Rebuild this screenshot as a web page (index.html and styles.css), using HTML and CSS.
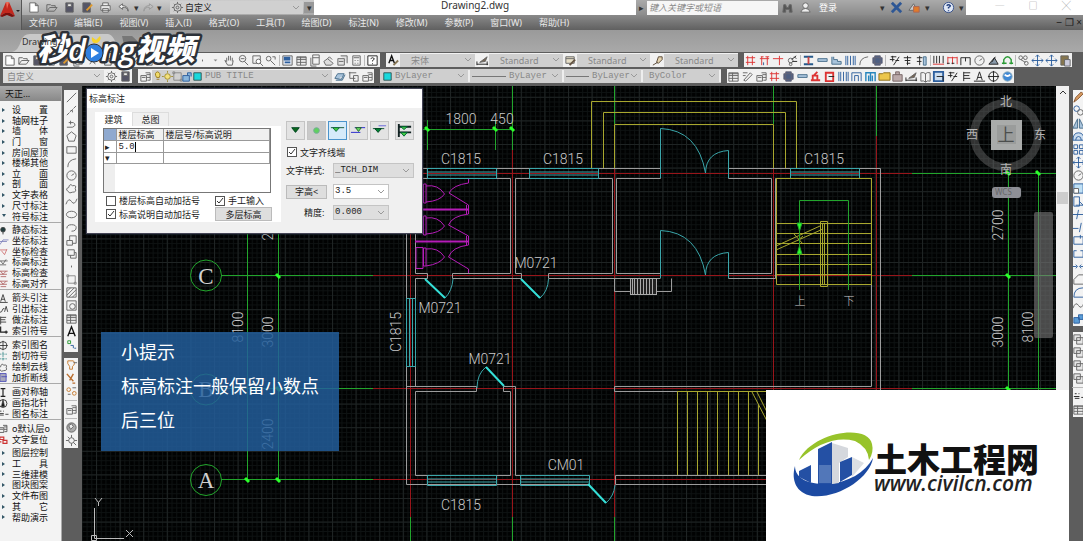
FILE: index.html
```
<!DOCTYPE html>
<html lang="zh-CN">
<head>
<meta charset="utf-8">
<title>Drawing2.dwg</title>
<link rel="stylesheet" href="styles.css">
</head>
<body>
<header class="head">
  <button class="app" aria-label="应用程序菜单"><svg viewBox="0 0 22 21"><path d="M0 14L6 0h3l6 14-5-3-5 0z" fill="#c3271d"/><path d="M6 0h3l-2 7z" fill="#ee6a57"/><path d="M0 14l5-3 5 0 5 3-3 1-5-2-5 2z" fill="#7c0f0c"/><path d="M16 8h4l-2 2z" fill="#222"/></svg></button>
  <div class="titlebar">
    <div class="quick">
      <div class="icons quick-icons" data-icons="new open save saveas print undo"></div><span class="tri">▾</span>
      <div class="icons one" data-icons="redo"></div><span class="tri">▾</span>
      <div class="space"><span class="icons one" data-icons="gear"></span><select aria-label="工作空间"><option>自定义</option></select></div>
      <span class="tri more">▾</span>
    </div>
    <div class="doc">Drawing2.dwg</div>
    <div class="info">
      <span class="tri go">▸</span><input placeholder="键入关键字或短语" aria-label="搜索">
      <div class="icons two" data-icons="binoc person"></div><a class="login" href="#">登录</a>
      <span class="tri push">▾</span><div class="icons two" data-icons="xchg lock"></div><span class="tri">▾</span>
      <div class="icons one help" data-icons="help"></div><span class="tri">▾</span>
    </div>
    <div class="win"><button aria-label="最小化">─</button><button aria-label="最大化">□</button><button aria-label="关闭">╳</button></div>
  </div>
  <nav class="menu"><a href="#">文件(F)</a><a href="#">编辑(E)</a><a href="#">视图(V)</a><a href="#">插入(I)</a><a href="#">格式(O)</a><a href="#">工具(T)</a><a href="#">绘图(D)</a><a href="#">标注(N)</a><a href="#">修改(M)</a><a href="#">参数(P)</a><a href="#">窗口(W)</a><a href="#">帮助(H)</a><span class="mdi">‒ ❐ ×</span></nav>
</header>
<div class="tabs"><svg class="tabshape" viewBox="0 0 118 20" aria-hidden="true"><path d="M0 20Q6 19 9 9Q11 2 18 2H96Q103 3 106 20z" fill="#c9c9c9"/><path d="M110 4h10q6 5 8 9h-16z" fill="#777"/></svg><a class="tab" href="#">Drawing2</a></div>
<div class="bars">
  <div class="bar std icons" data-icons="new open save print saveas sheet cut copy paste match block undo tri redo dot tri hand zoom zoomw zoomp | props table sheet tool box calc | q"></div>
  <div class="bar styles">
    <span class="icons one" data-icons="astyle"></span><select class="c1" aria-label="文字样式"><option>宋体</option></select>
    <span class="icons one" data-icons="dimstyle"></span><select class="c2" aria-label="标注样式"><option>Standard</option></select>
    <span class="icons one" data-icons="tabstyle"></span><select class="c3" aria-label="表格样式"><option>Standard</option></select>
    <span class="icons one" data-icons="leader"></span><select class="c2" aria-label="引线样式"><option>Standard</option></select>
  </div>
  <div class="bar arch icons" data-icons="rhash rcols rbeam knot | ibeam slab stair wallp arc column | fx1 fx2 fx3 | dims dimh dimv circle tri2 gloop | link move move paste"></div>
</div>
<div class="bars second">
  <div class="bar ws"><select aria-label="工作空间"><option>自定义</option></select><span class="icons two" data-icons="gear save"></span></div>
  <div class="bar layer"><span class="icons one" data-icons="layers"></span><span class="icons states" data-icons="bulb sun box0 lockb cyan"></span><select class="mono" aria-label="图层"><option>PUB TITLE</option></select><span class="icons three" data-icons="lay1 lay2 layers"></span></div>
  <div class="bar bylayer"><span class="icons one" data-icons="cyan"></span><select class="mono l1" aria-label="颜色"><option>ByLayer</option></select><i class="ln long"></i><select class="mono l2" aria-label="线型"><option>ByLayer</option></select><i class="ln"></i><select class="mono l3" aria-label="线宽"><option>ByLayer</option></select><select class="mono l4" aria-label="打印样式"><option>ByColor</option></select></div>
  <div class="bar arch2 icons" data-icons="table match layers rhash column slab redst redbox wallp gate gate2 folder case dimstyle book winp fx1 fence aaxis target ball"></div>
</div>
<main>
  <aside class="palette">
    <h2>天正...</h2>
    <ul class="g11 arrows"><li class="j">设 置</li><li>轴网柱子</li><li class="j">墙 体</li><li class="j">门 窗</li><li>房间屋顶</li><li>楼梯其他</li><li class="j">立 面</li><li class="j">剖 面</li><li>文字表格</li><li>尺寸标注</li><li class="down">符号标注</li></ul>
    <ul class="g6"><li data-i="pin">静态标注</li><li data-i="coord">坐标标注</li><li data-i="coordr">坐标检查</li><li data-i="elev">标高标注</li><li data-i="elevr">标高检查</li><li data-i="elevr">标高对齐</li></ul>
    <ul class="g4"><li data-i="aaxis">箭头引注</li><li data-i="leadA">引出标注</li><li data-i="fence">做法标注</li><li data-i="idx">索引符号</li></ul>
    <ul class="g4"><li data-i="target">索引图名</li><li data-i="sect">剖切符号</li><li data-i="cloudb">绘制云线</li><li data-i="brk">加折断线</li></ul>
    <ul class="g3"><li data-i="sym">画对称轴</li><li data-i="north">画指北针</li><li data-i="nm">图名标注</li></ul>
    <ul class="g2"><li data-i="layers">o默认层o</li><li data-i="reset">文字复位</li></ul>
    <ul class="g7 arrows"><li>图层控制</li><li class="j">工 具</li><li>三维建模</li><li>图块图案</li><li>文件布图</li><li class="j">其 它</li><li>帮助演示</li></ul>
  </aside>
  <div class="strip left">
    <div class="icons col" data-icons="line xline pline poly rect arc circle cloudb spline ellipse earc insert block dot box0 hatch region table bigA pts"></div>
    <div class="icons col" data-icons="bulbo bulbx sunx | layers | globe gearx"></div>
  </div>
  <section class="canvas">
    <svg class="drawing" viewBox="82 86 974 455" preserveAspectRatio="xMinYMin slice" role="img" aria-label="建筑平面图">
      <defs>
        <pattern id="minor" x="96" y="262" width="4.72" height="4.72" patternUnits="userSpaceOnUse"><path d="M.5 0V4.72M0 .5H4.72" stroke="#0e1212" fill="none"/></pattern>
        <pattern id="major" x="96" y="262" width="23.6" height="23.6" patternUnits="userSpaceOnUse"><path d="M.5 0V23.6M0 .5H23.6" stroke="#1f2424" fill="none"/></pattern>
        <g id="win"><path d="M0 0H69M0 3.5H69M0 6.5H69M0 10H69M0 0V10M69 0V10"/></g>
        <path id="tick" d="M-2 -2L2 2" stroke="#2bff2b" stroke-width="3"/>
      </defs>
      <rect x="82" y="86" width="2000" height="1000" fill="#010202"/>
      <rect x="82" y="86" width="2000" height="1000" fill="url(#minor)"/>
      <rect x="82" y="86" width="2000" height="1000" fill="url(#major)"/>
      <g class="red"><path d="M373 173.500H912M373 275.500H912M373 388.500H912M373 479.500H912M410.500 150V517M512.500 150V517M614.500 168V517M773.500 168V517M876.500 136V517"/></g>
      <g class="green"><path d="M221 275.500H373M221 388.500H373M221 479.500H373M912 173.500H1056M912 275.500H1056M912 388.500H1056M512.500 86V150M614.500 86V124M773.500 86V124M876.500 86V136M410.500 517V541M512.500 517V541M614.500 517V541M247.500 200V480M278.500 173V480M1008.500 173V480M1038.500 173V480M422 129.500H513M427.500 120V150M495.500 120V150"/>
        <circle cx="206" cy="275.500" r="15.500"/><circle cx="206" cy="389.500" r="15.500"/><circle cx="206" cy="480" r="15.500"/></g>
      <g><use href="#tick" x="278" y="276"/><use href="#tick" x="278" y="389"/><use href="#tick" x="278" y="480"/><use href="#tick" x="247" y="480"/><use href="#tick" x="1008" y="173"/><use href="#tick" x="1008" y="276"/><use href="#tick" x="1008" y="389"/><use href="#tick" x="1038" y="173"/><use href="#tick" x="427" y="129"/><use href="#tick" x="495" y="129"/><use href="#tick" x="512" y="129"/></g>
      <g class="wall"><path d="M406.500 168.500H660.500V178.500H616.500V273.500H660.500M406.500 168.500V484.500H588M415.500 178.500H510.500V273.500H452.500V278.500H521.500V273.500H515.500V178.500H612.500V273.500H548.500V278.500H660.500M415.500 178.500V273.500H427.500V278.500H415.500V386.500M728.500 178.500V168.500H880.500V390M728.500 178.500H771.500V273.500H728.500V278.500H775.500V178.500H871.500V386.500H614.500V391.500H880M406.500 386.500H476.500V391.500H415.500V475.500H510.500V391.500H503.500V386.500H515.500V475.500H588M766 475.500H615.500V484.500H766M614.500 279V291.500H630M656 291.500H671.500V278.500"/></g>
      <g fill="#222" stroke="#aaa"><rect x="630.500" y="278.500" width="26" height="16"/><path d="M632.500 279v15M634.500 279v15M637.500 279v15M640.500 279v15M643.500 279v15M646.500 279v15M649.500 279v15M652.500 279v15"/></g>
      <g class="cyan"><use href="#win" x="427.500" y="168.500"/><use href="#win" x="529.500" y="168.500"/><use href="#win" x="790.500" y="168.500"/><use href="#win" x="427.500" y="475.500"/><use href="#win" x="520.500" y="475.500"/><path d="M406.500 298.500H415.500V366.500H406.500zM409.500 298V366M412.500 298V366"/>
        <path d="M453 279Q452 291 445 298M548.500 279Q548 291 540 298M477 388Q477 374 486 367M615 485Q614 496 606 503M660.500 178V128.500Q698 130 705.500 173Q706 152 728.500 150.500V178M660.500 278V230.500Q698 232 705.500 275Q706 254 728.500 252.500V278"/>
        <path class="leaf" d="M425 279L445 298M521 279L540 298M486 367L504 386M588 484L606 503"/></g>
      <g class="yellow"><path d="M591.500 168V101.500H796.500V168M603.500 168V112.500H785.500V168M614.500 168V124.500H773.500V168M776.500 178.500H871.500V284.500H776.500zM776 223.500H871M776 233.500H871M776 243.500H871M776 254.500H871M776 264.500H871M776 274.500H871"/><path d="M820.500 221.500h7v65h-7zM822.500 223.500h2v61h-2zM776 246L820 226M776 250L823 229M794 234l9 10M803 236l-6 5"/><path d="M677 391.500H766M677.500 392V475M687.500 392V475M697.500 392V475M707.500 392V475M717.500 392V475M728.500 392V475M738.500 392V475M748.500 392V475M758.500 405V475M752 392L767 421M757 392L768 414"/></g>
      <g class="green"><path d="M799.500 290V200.500H848.500V290"/><path d="M797 223h5l-2.500 8zM797 254h5l-2.500-8z" fill="#2bff2b"/></g>
      <g class="magenta"><path d="M415 209.500H469M415 241.500H469" stroke-width="2"/><path d="M468.500 179v4Q453 185 449 193L468.500 205V214Q452 216 448.500 225L468.500 236V245Q452 247 448.500 257L468.500 269V273M466.500 205v9M466.500 236v9M423.500 184h2.500v19h-2.500zM426 186Q438 184 444.500 194Q440 201 426 202M423.500 216h2.500v19h-2.500zM426 218Q438 216 444.500 226Q440 233 426 234M423.500 248h2.500v18h-2.500zM426 249Q438 247 444.500 257Q440 264 426 266M416 247.500H423V268.500H416z"/></g>
      <g class="cad"><text x="461" y="124">1800</text><text x="502" y="124">450</text><text x="461" y="164">C1815</text><text x="563" y="164">C1815</text><text x="824" y="164">C1815</text><text x="536" y="268">M0721</text><text x="440" y="313">M0721</text><text x="490" y="364">M0721</text><text x="566" y="470">CM01</text><text x="461" y="510">C1815</text>
        <text transform="translate(401 332) rotate(-90)">C1815</text><text transform="translate(243 327) rotate(-90)">8100</text><text transform="translate(273 332) rotate(-90)">3000</text><text transform="translate(273 434) rotate(-90)">2400</text><text transform="translate(273 225) rotate(-90)">2700</text><text transform="translate(1003 225) rotate(-90)">2700</text><text transform="translate(1003 332) rotate(-90)">3000</text><text transform="translate(1033 327) rotate(-90)">8100</text></g>
      <g class="hz"><text x="800" y="305">上</text><text x="849" y="305">下</text></g>
      <g class="axis"><text x="206" y="284">C</text><text x="206" y="397">B</text><text x="206" y="488">A</text></g>
      <g stroke="#bbb" fill="none"><path d="M94.500 508V538.500H124M91.500 535.500h5v5h-5zM95 498l3.500 4.500L102 498M98.500 502v4M126 530l7 7M133 530l-7 7"/></g>
      <circle cx="1006" cy="135" r="32" fill="none" stroke="#8b8b8b" stroke-opacity=".36" stroke-width="8"/>
      <rect x="991" y="120" width="31" height="30" fill="#a9abaa"/><rect x="997" y="125" width="19" height="19" fill="#9a9c9b"/>
      <g class="compass"><text x="1006" y="141" class="up">上</text><text x="1006" y="106">北</text><text x="972" y="139">西</text><text x="1040" y="139">东</text><text x="1006" y="174">南</text></g>
      <rect x="992" y="187" width="29" height="11" rx="3" fill="#8e8f96"/><text x="995" y="195" class="wcs">WCS</text>
      <rect x="1034" y="212" width="19" height="126" rx="2" fill="#777" fill-opacity=".62"/>
    </svg>
    <aside class="hint"><p>小提示</p><p>标高标注一般保留小数点</p><p>后三位</p></aside>
    <form class="dialog">
      <h3>标高标注</h3>
      <div class="dbody">
        <div class="dleft">
          <div class="dtabs"><button type="button" class="on">建筑</button><button type="button">总图</button></div>
          <div class="pane">
            <div class="gridbox"><table><thead><tr><th class="k"></th><th class="a">楼层标高</th><th>楼层号/标高说明</th></tr></thead><tbody><tr><td class="k">▸</td><td class="caret"><span>5.0</span></td><td></td></tr><tr><td class="k">▾</td><td></td><td></td></tr></tbody></table></div>
            <div class="checks"><label><input type="checkbox">楼层标高自动加括号</label><label><input type="checkbox" checked>手工输入</label><label><input type="checkbox" checked>标高说明自动加括号</label><button type="button">多层标高</button></div>
          </div>
        </div>
        <div class="dright">
          <div class="modes">
            <button type="button" aria-label="实心"><svg viewBox="0 0 18 18"><path d="M5 6h8l-4 5z" fill="#0a6a1c" stroke="#042"/></svg></button>
            <button type="button" class="dim" aria-label="圆点"><svg viewBox="0 0 18 18"><circle cx="9" cy="9" r="3" fill="#5fd05f" stroke="#7a9"/></svg></button>
            <button type="button" class="on" aria-label="普通"><svg viewBox="0 0 18 18"><path d="M2 6h14" stroke="#153"/><path d="M4 6h7L7.500 10z" fill="#3fd03f" stroke="#164"/></svg></button>
            <button type="button" aria-label="带基线"><svg viewBox="0 0 18 18"><path d="M5 6h11M1 11h10" stroke="#22c"/><path d="M6 6h6l-3 4z" fill="#6d6" stroke="#262"/></svg></button>
            <button type="button" aria-label="引线"><svg viewBox="0 0 18 18"><path d="M8 4h8" stroke="#66d"/><path d="M2 7h12" stroke="#153"/><path d="M4 7h7l-3.500 4z" fill="#083" stroke="#042"/></svg></button>
            <button type="button" class="last" aria-label="多层"><svg viewBox="0 0 18 18"><path d="M3 2v14M3 5h13M3 11h13" stroke="#122" stroke-width="2"/><path d="M5 5h7L8.500 8zM5 11h7l-3.500 4z" fill="#4c4" stroke="#063"/></svg></button>
          </div>
          <label class="ck"><input type="checkbox" checked>文字齐线端</label>
          <div class="frow"><label for="ts">文字样式:</label><select id="ts" class="mono wide"><option>_TCH_DIM</option></select></div>
          <div class="frow"><button type="button">字高&lt;</button><select class="mono white" aria-label="字高"><option>3.5</option></select></div>
          <div class="frow"><label for="pr" class="rt">精度:</label><select id="pr" class="mono"><option>0.000</option></select></div>
        </div>
      </div>
    </form>
  </section>
  <div class="scroll"><svg viewBox="0 0 11 14" aria-hidden="true"><path d="M3 8l3-3 3 3" fill="none" stroke="#333"/></svg><i></i></div>
  <div class="strip right">
    <div class="icons col" data-icons="pencil copyo mirror offset array move circle scaleb stretch trim extend breakr breakp join chamfer fillet spline boom"></div>
    <div class="icons col" data-icons="copy copy copy copy | nm table"></div>
  </div>
  <div class="brand"><svg viewBox="766 390 303 151" role="img" aria-label="土木工程网">
    <path d="M799 460C812 432 868 423 872 444Q874 452 869 460Q868 447 855 441Q828 434 799 460z" fill="#97c32a"/>
    <path d="M795 466C795 480 812 485 829 484C848 482 865 473 873 458C870 478 838 499 812 496C796 493 791 480 795 466z" fill="#1c4aa2"/>
    <path d="M832 443l16 5v9l-9 6v20l-7 1z" fill="#d5d8dd"/><path d="M852 457l12 6-12 14z" fill="#dcdfe3"/>
    <path d="M799 471l12-6v18l-12-6zM818 449l14-7v42h-14zM840 462l12-5v18l-12 7z" fill="#2450a4"/><path d="M819 465h12v18h-12z" fill="#8ba7d2" opacity=".45"/>
    <text x="874" y="472" class="bz">土木工程网</text><text x="874" y="491" class="url">www.civilcn.com</text></svg></div>
</main>
<svg class="mark" viewBox="0 0 170 44" role="img" aria-label="秒懂视频"><g class="mk"><text x="5" y="30" font-size="31">秒</text><text x="36" y="31" font-size="31" class="la">d</text><text x="69" y="31" font-size="31" class="la">ng</text><text x="103" y="30" font-size="30">视频</text></g><circle cx="62" cy="23" r="9" fill="#2e7fe0" stroke="#2c3138"/><path d="M59 18l8 5-8 5z" fill="#fff"/><path d="M60 7l4 3 4-4q2 4-3 7h-3q-3-2-2-6z" fill="#f5d22c"/></svg>
<script src="icons.js"></script>
</body>
</html>
```

FILE: styles.css
```
*{box-sizing:border-box}
body{margin:0;height:100vh;display:flex;flex-direction:column;overflow:hidden;background:#5d5d5d;font:9px/11px "Noto Sans","Noto Sans CJK SC",sans-serif;color:#222;position:relative}
button,input,select{font:inherit;color:inherit;border:0;padding:0;margin:0;background:none;min-width:0;border-radius:0}
a{color:inherit;text-decoration:none}
p,h2,h3,ul{margin:0;padding:0;font-weight:normal;list-style:none}
h2,h3{font-size:9px}
select{appearance:none;height:13px;padding:0 12px 0 4px;background:url("data:image/svg+xml,%3Csvg xmlns='http://www.w3.org/2000/svg' width='8' height='6'%3E%3Cpath d='M1 1l3 3 3-3' fill='none' stroke='%23999'/%3E%3C/svg%3E") no-repeat right 3px center}
.mono{font-family:"Liberation Mono","Noto Sans CJK SC",monospace}
.head{display:grid;grid-template-columns:22px 1fr;grid-template-rows:15px 15px;flex:none}
.app{grid-row:1/3;background:linear-gradient(#aaa,#777);border-right:1px solid #555}
.app svg{display:block;width:22px;height:21px;margin-top:-6px}
.titlebar{display:flex;align-items:stretch;background:#fff;min-width:0}
.quick{width:292px;display:flex;align-items:center;background:linear-gradient(#ccc,#aaa);padding-left:2px}
.quick-icons{width:108px}
.tri{width:9px;font-size:9px;color:#333;text-align:center}
.space{display:flex;align-items:center;width:133px;margin-left:6px;background:#d0d0d0;height:13px}
.space select{flex:1;padding-left:1px;font-size:9px}
.more{margin-left:auto;width:10px;background:#999}
.doc{flex:1;text-align:center;font-size:10px;line-height:11px;color:#333}
.info{width:330px;display:flex;align-items:center;background:linear-gradient(#aaa,#8c8c8c);color:#fff}
.go{width:11px}
.info input{width:131px;height:14px;background:#f6f6f6;color:#555;padding-left:2px;font-style:italic}
.info input::placeholder{color:#888}
.info .two{width:36px}
.login{margin-left:5px}
.push{margin-left:auto}
.help{margin:0 2px 0 9px}
.win{width:117px;display:flex;justify-content:space-around;color:#999;line-height:10px;padding-left:17px}
.win button{height:12px}
.menu{display:flex;align-items:center;gap:17px;padding-left:7px;background:linear-gradient(#8a8a8a,#606060);color:#e9e9e9;white-space:nowrap}
.mdi{margin-left:auto;color:#222;font-size:10px;padding-right:1px}
.tabs{height:22px;flex:none;background:linear-gradient(#9a9a9a,#a9a9a9);padding-left:12px;display:flex;align-items:end;position:relative}
.tabshape{width:118px;height:20px;flex:none;overflow:visible}
.tab{margin-left:-108px;line-height:20px;color:#333;z-index:1}
.bars{display:flex;height:16px;flex:none;gap:6px;padding:1px 0 0 3px;background:#5d5d5d}
.second{height:18px}
.bar{display:flex;align-items:center;height:14px;background:#f1f1f1;flex:none}
.bars select{background-color:#cfcfcf;color:#888}
.std{width:377px}.styles{width:352px}
.arch{width:328px}
.c1{width:75px}.c2{width:74px}.c3{width:73px}
.styles select{text-indent:7px}
.ws{width:129px}.ws select{width:101px;background-color:#dcdcdc}
.layer{width:236px}.states{width:50px;background:#cfcfcf}
.layer select{flex:1;padding:0 0 0 3px}
.three{width:42px}
.bylayer{width:341px;background:#cfcfcf}
.bylayer select{padding-left:1px;height:12px;border-right:2px solid #eee;padding-right:0}
.l1{width:76px}.l2{width:56px}.l3{width:52px}.bylayer .l4{flex:1;padding-left:6px}
.ln{height:1px;width:23px;margin:0 2px;background:#777}.long{width:34px}
.arch2{width:287px}
.icons{display:flex;align-items:center}
.icons button{flex:1 1 0;height:13px;display:flex;justify-content:center;align-items:center}
.icons svg{width:13px;height:13px;flex:none;fill:none;stroke:#666}
.icons>i{width:1px;height:11px;background:#bbb;margin:0 1px}
.one{width:14px;flex:none}.two{width:28px;flex:none}
main{flex:1;display:flex;min-height:0;position:relative}
.palette{width:62px;background:#f3f3f3;border-right:1px solid #aaa;overflow:hidden;flex:none;color:#111}
.palette h2{height:15px;padding:2px 0 0 5px;background:linear-gradient(#aaa,#888);margin-bottom:4px}
.palette ul{display:grid;grid-auto-rows:minmax(0,1fr);border-bottom:1px solid #aaa;margin-bottom:3px}
.palette .g11{height:118px;margin-bottom:2px}.g6{height:65px}.g4{height:44px}.g3{height:33px}.palette .g2{height:22px;border:0}.palette .g7{height:75px;border:0}
.palette li{display:flex;align-items:center;padding-left:12px;white-space:nowrap;position:relative;line-height:10px}
.palette .j{display:block;width:48px;text-align-last:justify}
.arrows li::before{content:"";position:absolute;left:2px;top:3px;border:2px solid transparent;border-left:3px solid #356}
.arrows .down::before{border-color:#356 transparent transparent;border-width:3px 2px}
.palette li svg{position:absolute;left:-3px;top:0;width:12px;height:11px;fill:none;stroke:#444}
.strip{flex:none;display:flex;flex-direction:column;gap:6px;overflow:hidden}
.left{width:20px;padding:4px 4px 0 2px}
.col{flex-direction:column;background:#f3f3f3;padding:1px 0;flex:none}
.col button{flex:none;width:14px}
.icons.col>i{width:12px;height:1px;margin:2px 0}
.canvas{flex:1;position:relative;overflow:hidden;background:#010202;min-width:0}
.drawing{display:block;width:100%;height:100%}
.drawing .red{stroke:#98151a;fill:none}.drawing .green{stroke:#22a52c;fill:none}
.wall{stroke:#9c9c9c;fill:none}.drawing .cyan{stroke:#3aa6aa;fill:none}.leaf{stroke:#35e0d8;stroke-width:2}
.yellow{stroke:#a8a72e;fill:none}.magenta{stroke:#b51cb8;fill:none}
.cad{font:300 14px "Liberation Sans Narrow","Roboto",sans-serif;fill:#c9c9c9;text-anchor:middle}
.hz{font:300 11px "Noto Sans CJK SC",sans-serif;fill:#ccc;text-anchor:middle}
.axis{font:23px "Liberation Serif",serif;fill:#d0d0d0;text-anchor:middle}
.compass{font:12px "Noto Sans CJK SC",sans-serif;fill:#b5b5b5;text-anchor:middle}
.compass .up{font-size:17px;fill:#4c4e4d}
.wcs{font:8px "Noto Sans",sans-serif;fill:#666}
.hint{position:absolute;left:19px;top:246px;padding:2px 20px 15px;background:rgba(35,94,156,.84);color:#fff;font:700 18px/34px "Noto Sans CJK SC",sans-serif;width:238px;white-space:nowrap}
.dialog{position:absolute;left:4px;top:2px;width:337px;background:#f0f0f0;border:1px solid #445;box-shadow:0 0 2px #234;color:#222;padding-bottom:7px}
.dialog h3{height:19px;line-height:19px;padding-left:2px;background:#fff}
.dbody{display:flex}
.dleft{width:186px;margin:4px 0 0 8px}
.dtabs button{height:14px;width:37px;border:1px solid #ddd;border-bottom:0}
.dtabs{display:flex}.dtabs .on{background:#fff;border-color:#fff}
.pane{background:#fff;padding:2px 9px 1px 8px}
.gridbox{height:65px;width:168px;border:1px solid #777;background:linear-gradient(90deg,#eee 11px,#fff 11px)}
table{border-collapse:collapse;width:100%;table-layout:fixed}
th,td{height:11px;line-height:9px;padding:0 0 0 2px;border:1px solid #999;text-align:left;font-weight:normal;white-space:nowrap;border-top:0;border-left:0}
th{background:#f0f0f0}td{background:#fff}
.k{width:12px;padding:0 0 0 1px}th.k{background:#8fa9cf}.a{width:47px}
.caret span{font:9px/9px "Liberation Mono",monospace;border-right:1px solid #000}
.checks{display:grid;grid-template-columns:109px 1fr;row-gap:1px;margin:2px 0 0 3px;align-items:center}
label{display:flex;align-items:center;gap:3px;white-space:nowrap}
input[type=checkbox]{appearance:none;width:10px;height:10px;border:1px solid #555;background:#fff;flex:none}
input[type=checkbox]:checked{background:#fff url("data:image/svg+xml,%3Csvg xmlns='http://www.w3.org/2000/svg' width='8' height='8'%3E%3Cpath d='M1 4l2 2 4-5' fill='none' stroke='%23333'/%3E%3C/svg%3E") no-repeat center}
.checks button,.frow button{height:14px;background:#dedede;border:1px solid #bbb;line-height:11px}
.checks button{width:57px}
.dright{flex:1;padding:13px 0 0 5px}
.modes{display:flex;gap:2px}
.modes button{width:19px;height:19px;background:#e3e3e3;border:1px solid #c4c4c4}
.modes svg{display:block;width:17px;height:17px;fill:none}
.modes .dim{background:#c9c9c9}.modes .on{background:#d6ebfa;border:1px solid #4b94cc}.modes .last{margin-left:4px}
.ck{margin:6px 0 5px 1px;height:12px}
.frow{display:flex;align-items:center;height:15px;margin-bottom:6px}
.frow>:first-child{width:41px;margin-right:6px}
.frow .rt{padding-left:18px}
.frow select{width:56px;height:15px;background-color:#dedede;border:1px solid #c4c4c4;padding-left:1px;font-size:9px}
.frow .wide{width:81px}.frow .white{background-color:#fff}
.scroll{width:13px;background:#f0f0f0;flex:none;padding:0 1px}
.scroll svg{display:block;width:11px;height:14px;margin-bottom:92px}
.scroll i{display:block;height:12px;background:#cdcdcd}
.right{width:14px;padding:4px 0 0 4px}
.brand{position:absolute;right:14px;bottom:0;width:303px;background:#fff}
.brand svg{display:block;width:100%}
.bz{font:900 33px "Noto Sans CJK SC",sans-serif;fill:#111}
.url{font:italic 600 21px "Open Sans",sans-serif;fill:#222}
.mark{position:absolute;left:32px;top:30px;width:170px;height:44px;overflow:visible}
.mk{font-family:"Noto Sans CJK SC",sans-serif;font-weight:900;font-style:italic;fill:#fff;stroke:#2c3138;stroke-width:5px;stroke-linejoin:round;paint-order:stroke}
.la{font-family:"Open Sans",sans-serif;font-weight:600}
```

FILE: icons.js
```
// Toolbar glyphs, drawn on a 14 x 14 grid.
const p = (d, a = '') => `<path d="${d}" ${a}/>`;
const B = 'stroke="#2d5f9e"', R = 'stroke="#d33"', K = 'stroke="#222"', G = 'stroke="#2a9a35"', T = 'stroke="#4a6f8c" fill="#a9c4dc"';
const icons = {
  new: p('M3 2h6l3 3v7H3zM9 2v3h3', 'fill="#fff"'),
  open: p('M2 11V4h4l1 1h4v2M2 11l3-4h8l-3 4z'),
  save: p('M3 2h8v10H3z', 'fill="#556"') + p('M5 3h4v3H5z', 'fill="#eee"'),
  saveas: p('M2 2h8v10H2z', 'fill="#556"') + p('M6 10l6-6', 'stroke="#e09a2b" stroke-width="2"'),
  print: p('M4 5V2h6v3M2 5h10v5H2zM4 8h6v4H4z', 'fill="#eee"'),
  undo: p('M6 3L2 6l4 3V7q5-1 6 4q0-6-6-6z', 'fill="#eee"'),
  redo: p('M8 3l4 3-4 3V7Q3 6 2 11Q2 5 8 5z', 'stroke="#999"'),
  tri: p('M5 6h4L7 8z', 'fill="#888" stroke="none"'),
  gear: '<circle cx="7" cy="7" r="4"/><circle cx="7" cy="7" r="1.500"/>' + p('M7 1v2M7 11v2M1 7h2M11 7h2M3 3l1 1M10 10l1 1M11 3l-1 1M3 11l1-1'),
  binoc: p('M2 12l1-8h2l1 3h2l1-3h2l1 8H9V9H5v3z', 'fill="#555"'),
  person: '<circle cx="7" cy="5" r="3" fill="#eee"/>' + p('M2 12q1-4 5-4t5 4z', 'fill="#eee"'),
  xchg: p('M2 2l10 10M12 2L2 12', 'stroke="#2e5795" stroke-width="3"'),
  lock: p('M1 10L6 3l4 7z', 'fill="#ccc"') + p('M6 6h6v6H6z', 'fill="#e07b2b" stroke="#a65"'),
  help: '<circle cx="7" cy="7" r="5.500" fill="#dfe7f5" stroke="#35508d"/>' + p('M5 5q2-2 4 0q0 1-2 2v1M7 10v1', 'stroke="#23407f" stroke-width="1.500"'),
  sheet: p('M4 1h7v10H4zM4 4h7M2 4v9h6'), cut: p('M3 2l7 9M11 2L4 11'),
  copy: p('M2 2h7v6H2zM5 5h7v7H5z', 'fill="#e6e6e6"'),
  paste: p('M2 2h8v10H2z', 'fill="#86764e"') + p('M6 6h6v7H6z', 'fill="#ccd"'),
  match: p('M3 11l7-8 2 2-7 7zM2 3h5M2 6h3'), block: p('M3 3h7v6H3zM6 9v3h6V6h-2'),
  dot: p('M7 6v2'), hand: p('M4 8V4M6 7V2M8 7V2M10 8V4M4 8L2 7l3 5h5l1-5'),
  zoom: '<circle cx="6" cy="5" r="3.500"/>' + p('M8 8l4 4M4 5h4'),
  zoomw: p('M2 2h8v8H2z') + '<circle cx="8" cy="8" r="2.500" fill="#fff"/>' + p('M10 10l3 3'),
  zoomp: '<circle cx="5" cy="5" r="2.500"/>' + p('M7 7l5 5M9 3h3v3'),
  props: p('M2 2h10v10H2z', 'fill="#e6eaf2"') + p('M4 4h5v2H4zM4 9h6', B + ' stroke-width="2"'),
  table: p('M2 3h10v9H2zM2 6h10M2 9h10M6 3v9', 'fill="#eee"') + p('M2 4h10'),
  tool: p('M2 8l4-3 6 5-2 2H4zM6 5l2-2 3 3', 'fill="#ddd"'),
  box: p('M2 5h7v7H2zM5 2h7v8M3 8h5', 'fill="#e2e2e2"'), calc: p('M3 2h8v10H3zM4 4h6M5 7h1M8 7h1M5 10h1M8 10h1'),
  q: p('M2 2h10v10H2z', K + ' fill="#fff"') + p('M5 5q2-2 4 0q0 1-2 2v1M7 10v1', K),
  astyle: p('M2 10L5 2l3 8M3 7h4', 'stroke="#111" stroke-width="1.500"') + p('M7 12l5-5', 'stroke="#875" stroke-width="2"'),
  dimstyle: p('M1 11h12M1 8v4M12 8v4', K) + p('M4 9l8-6-2 5z', 'fill="#765"'),
  tabstyle: p('M2 3h9v7H2zM2 5h9', 'fill="#e7dfc8"') + p('M6 12l6-6', 'stroke="#654" stroke-width="2"'),
  leader: p('M2 12l5-3M6 9l2-6h4v3L8 10z', 'fill="#e6d5b0" stroke="#543"'),
  rhash: p('M4 2v10M9 2v10M2 4h10M2 9h10', R), rcols: p('M4 3v9M10 3v9M3 3h3M8 3h4M2 5h10', R) + p('M6 9v3', B),
  rbeam: p('M1 5h7V2M8 5v7M8 5h4', R), knot: '<circle cx="5" cy="7" r="2.500"/><circle cx="5" cy="11" r="1.500"/>' + p('M6 6l5-4M7 8h5M9 3l2 2', K),
  ibeam: p('M2 3h10M2 11h10', 'stroke="#25598b" stroke-width="2"') + p('M7 3v8', 'stroke="#c44" stroke-width="2"'),
  slab: p('M2 5h10v3H2z', T), stair: p('M2 3v8h10V8H8V6H4V3', T), wallp: p('M2 2v10M4 2v10M7 2v10M10 2v10M12 2v10', B),
  arc: p('M3 12Q3 4 12 3'), column: p('M4 2h6v10H4zM2 4h10v6H2z', 'fill="#4d5f83" stroke="#667"'),
  fx1: p('M3 3h6M5 2v6M2 6h5M6 12l6-9M8 7h4', K), fx2: p('M3 4h8M7 2v10M4 7h6M6 10h4', K), fx3: p('M2 4h6M5 2v10M2 8h5', K) + p('M9 3h3v9H9z', T),
  dims: p('M2 2v8M5 2v8M8 2v8M12 2v8', K) + p('M1 11h12', R), dimh: p('M2 4h10M2 3v8M7 3v8M12 3v8', R) + p('M1 10h3M6 10h3', K),
  dimv: p('M2 4h10M2 4v8M7 4v4M12 4v8', K), circle: '<circle cx="7" cy="7" r="5"/>' + p('M7 7l3-2'),
  tri2: p('M2 11h10L8 4zM5 9l4-6', K + ' fill="#89a"'), gloop: p('M3 11V6q4-6 8 0v5M1 10h5M9 10h4', G + ' stroke-width="1.500"'),
  link: '<circle cx="4" cy="4" r="2"/><circle cx="9" cy="4" r="2"/><circle cx="10" cy="10" r="2"/>' + p('M4 6l5 3'),
  move: p('M7 1v12M1 7h12M5 3l2-2 2 2M5 11l2 2 2-2M3 5L1 7l2 2M11 5l2 2-2 2', B),
  layers: p('M2 6h6v6H2zM7 3h5v8H9M8 5h4M8 8h4M3 8h4'), lay1: p('M2 9l3-5h7l-3 6zM3 11h7l3-6', T), lay2: p('M3 2v7h6M7 6h5v6H7zM2 3h8'),
  bulb: p('M7 2q4 1 2 6H6Q3 3 7 2zM6 10h3', 'stroke="#997a20" fill="#f0dc6a"'),
  sun: '<circle cx="7" cy="7" r="3" fill="#f3e07b" stroke="#a08c30"/>' + p('M7 1v2M7 11v2M1 7h2M11 7h2', 'stroke="#a08c30"'),
  box0: p('M3 3h8v8H3zM2 2h2v2H2zM10 10h2v2h-2z', 'stroke="#888"'), lockb: p('M2 6h7v6H2zM7 6V3h4v4', B + ' fill="#89b6dd"'),
  cyan: p('M3 3h8v8H3z', 'fill="#18d8dc" stroke="#355"'),
  redst: p('M2 11h10M4 10V6h5v4M5 6l4-4', R + ' stroke-width="2"'), redbox: p('M3 3h8v9H3z', R + ' stroke-width="2"') + p('M6 7h6', K),
  gate: p('M2 12V3h10v9M5 12V6h4v6', B), gate2: p('M2 12V3h10v9M5 12V6M9 12V6M7 3v9', 'stroke="#2685bd" stroke-width="1.500"'),
  folder: p('M1 4h4l1-1h7v8H1z', 'fill="#ecc64a" stroke="#8b6d1a"'), case: p('M2 5h10v7H2zM5 5V2h4v3', 'fill="#baa" stroke="#766"'),
  book: p('M2 3q3-1 5 1v9Q5 11 2 12zM7 4q2-2 5-1v9q-3-1-5 1'), winp: p('M2 2h10v10H2z', B + ' stroke-width="2" fill="#cde"') + p('M5 7h7v5', K),
  fence: p('M4 2v10M4 3h7M4 6h6M4 9h7', K), aaxis: p('M4 11L7 2l3 9M5 8h4M1 12h12', K), target: '<circle cx="7" cy="7" r="5" stroke="#222"/>' + p('M7 1v12M1 7h12', K),
  ball: '<circle cx="7" cy="7" r="5" fill="#4089d5" stroke="#8ab"/>' + p('M4 5q3 3 6 0', 'stroke="#fff" stroke-width="2"'),
  line: p('M2 12L12 2'), xline: p('M2 12L12 2', 'stroke-dasharray="4 1"') + p('M6 7h2v2'), pline: p('M2 11h6q5-2 1-5H4M6 4v4'), poly: p('M7 2l5 4-2 6H4L2 6z'),
  rect: p('M2 4h10v7H2z'), spline: p('M1 10Q4 2 7 7t6-3'), cloudb: p('M3 10q-3-3 1-4q1-5 4-2q5-1 3 3q2 4-3 4q-3 2-5-1z'),
  ellipse: '<ellipse cx="7" cy="7" rx="5.500" ry="3.500"/>', earc: p('M2 8q0-4 5-4t5 3q0 4-5 4'), insert: p('M2 7h6v5H2zM5 7V2h7v8H8'),
  hatch: p('M2 2h10v10H2zM2 6l4-4M2 10l8-8M4 12l8-8M8 12l4-4'), region: p('M2 2h10v10H2z') + '<circle cx="8" cy="8" r="3"/>',
  bigA: p('M3 12L7 2l4 10M4 9h6', 'stroke="#111" stroke-width="1.500"'), pts: p('M3 3h3v3H3z', G) + p('M6 8h3v3M10 11h2', B),
  bulbo: p('M3 2h6q3 3-1 6v3H5V8Q2 5 3 2z', 'stroke="#c67a2e"') + p('M9 4h4'), bulbx: p('M2 2l7 8M9 2L5 9M8 12h3', 'stroke="#b96e2f" stroke-width="1.500"'),
  sunx: '<circle cx="4" cy="5" r="2" stroke="#c67a2e"/><circle cx="10" cy="9" r="2" stroke="#c67a2e"/>' + p('M8 3h4M3 10h3'),
  globe: '<circle cx="7" cy="7" r="5" fill="#aaa"/>' + p('M4 5l3-2 2 3-3 3z', 'fill="#eee"'), gearx: '<circle cx="7" cy="7" r="3"/>' + p('M7 1v3M7 10v3M1 7h3M10 7h3M3 3l2 2M9 9l3 3'),
  pencil: p('M2 12l2-5 6-6 2 2-6 6z', 'stroke="#84522c" fill="#d79b62"'), copyo: '<circle cx="5" cy="5" r="3" stroke="#2d5f9e"/><circle cx="9" cy="9" r="3"/>',
  mirror: p('M6 2v10H1zM8 2v10h5z', T), offset: p('M1 11q0-8 6-8t6 8zM4 11q0-4 3-4t3 4', B + ' fill="#cde"'), array: p('M2 2h4v4H2zM8 2h4v4H8zM2 8h4v4H2zM8 8h4v4H8z', B),
  scaleb: p('M2 2h10v10H2z', B + ' fill="#bfe0f5"') + p('M2 7h5v5H2z', 'fill="#fff"'), stretch: p('M2 2h6v10H2zM8 7l4 4M4 11h8', B), trim: p('M1 7h12M7 2L5 12', B), extend: p('M1 8h6M10 2L8 12', B),
  breakr: p('M2 3h10v8H2zM9 1v4', B), breakp: p('M2 11V4h3M9 4h3v7H2', B), join: p('M1 7h4M9 7h4M4 5l2 2-2 2M10 5L8 7l2 2', B), chamfer: p('M2 12V7l5-5h6M2 12h10'), fillet: p('M2 12Q2 2 12 2M2 12h10', B),
  boom: p('M2 6h6v6H2zM7 3h5v5H7z', 'fill="#5a9cd6" stroke="#2d5f9e"'),
  pin: p('M7 12V9', K) + '<circle cx="7" cy="6" r="3" fill="#233d3d"/>', coord: p('M3 11l4-6h7M1 7h11', 'stroke="#777ab8"'), coordr: p('M3 5h9M5 6l4 5 3-7', 'stroke="#c66"'),
  elev: p('M2 5h11M4 5l3 4 4-6M3 10h8', 'stroke="#555"'), elevr: p('M2 4h11M4 4l3 4 4-4M3 8h9M4 11h7', 'stroke="#a55"'),
  leadA: p('M2 11q4 0 5-5h2M9 10l2-7 2 7', K), idx: p('M4 2v7h6', K + ' stroke-width="1.500"') + '<circle cx="11" cy="9" r="1.500" fill="#222"/>',
  sect: p('M2 4h10M2 10h10M7 1v12', 'stroke="#3a8b8b" stroke-dasharray="3 1"'), brk: p('M3 2h8v10H3zM5 6h7', 'stroke="#3c3fb5" fill="#aab"'),
  sym: p('M4 2h6M4 12h6M7 2v10', K + ' stroke-width="1.500"'), north: '<circle cx="7" cy="7" r="5" stroke="#111"/>' + p('M7 2l2 9H5z', 'fill="#111"'),
  nm: p('M2 7h6M3 4h2M7 4h1M3 9h5M10 8h4', K), reset: p('M3 4h5v3H3zM7 8h5v4H7zM3 10h2', 'stroke="#c33" stroke-width="1.500"'),
};
const draw = n => `<svg viewBox="0 0 14 14" aria-hidden="true">${icons[n] || ''}</svg>`;
document.querySelectorAll('[data-icons]').forEach(e => {
  e.innerHTML = e.dataset.icons.split(' ').map(n => n === '|' ? '<i></i>' : `<button type="button" aria-label="${n}">${draw(n)}</button>`).join('');
});
document.querySelectorAll('[data-i]').forEach(e => e.insertAdjacentHTML('afterbegin', draw(e.dataset.i)));
```
